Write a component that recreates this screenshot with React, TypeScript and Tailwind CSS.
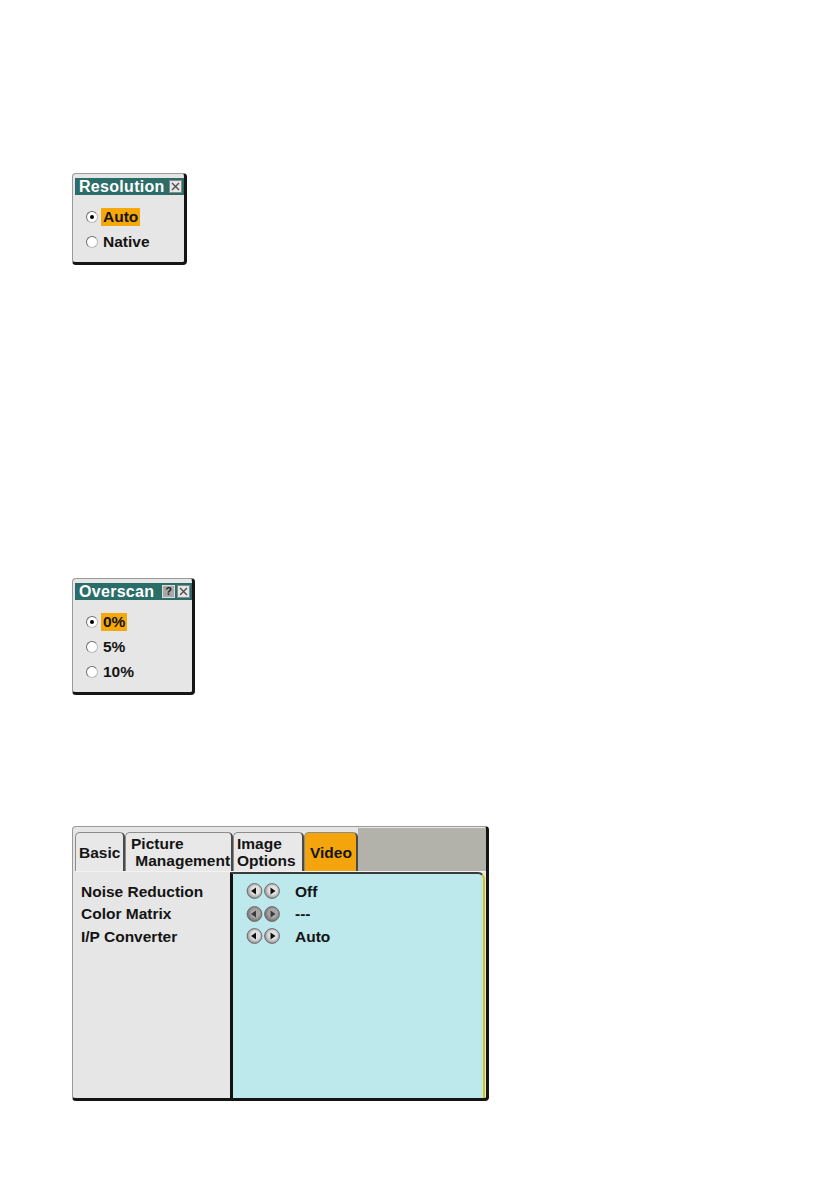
import { useId } from 'react';

// OSD-style projector menus: two small radio dialogs and the Video tab page.

const resolutionOptions = [
  { label: 'Auto', checked: true },
  { label: 'Native', checked: false },
];

const overscanOptions = [
  { label: '0%', checked: true },
  { label: '5%', checked: false },
  { label: '10%', checked: false },
];

const videoRows = [
  { label: 'Noise Reduction', value: 'Off', disabled: false },
  { label: 'Color Matrix', value: '---', disabled: true },
  { label: 'I/P Converter', value: 'Auto', disabled: false },
];

function CloseBox() {
  return (
    <svg width="13" height="13" viewBox="0 0 13 13" className="block">
      <rect x="0.5" y="0.5" width="12" height="12" fill="#e6e6e6" stroke="#8a8a8a" />
      <path d="M3 3 L10 10 M10 3 L3 10" stroke="#4a4a4a" strokeWidth="1.3" />
    </svg>
  );
}

function HelpBox() {
  return (
    <span className="flex h-[13px] w-[13px] items-center justify-center border border-[#dcdcdc] bg-[#a8a8a8] text-[11px] font-bold leading-none text-[#222]">
      ?
    </span>
  );
}

function Radio({ checked }: { checked: boolean }) {
  return (
    <span className="flex h-[12px] w-[12px] shrink-0 items-center justify-center rounded-full border border-[#6e6e6e] border-r-[#b8b8b8] border-b-[#b8b8b8] bg-white">
      {checked && <span className="h-[4px] w-[4px] rounded-full bg-black" />}
    </span>
  );
}

function Dialog({
  title,
  options,
  help,
  className,
}: {
  title: string;
  options: { label: string; checked: boolean }[];
  help?: boolean;
  className: string;
}) {
  return (
    <div
      className={`rounded-[4px] border-l border-t border-[#9a9a9a] border-r-[3px] border-b-[3px] border-r-[#161616] border-b-[#161616] bg-[#e6e6e6] pl-[2px] pt-[4px] pb-[8px] ${className}`}
    >
      <div className="flex h-[17px] items-center justify-between bg-[#2b6e69] pl-[4px] pr-[2px]">
        <span className="text-[16px] font-bold leading-none tracking-[0.3px] text-white">{title}</span>
        <div className="flex gap-[2px]">
          {help && <HelpBox />}
          <CloseBox />
        </div>
      </div>
      <ul className="pt-[9px] pl-[11px]">
        {options.map((o) => (
          <li key={o.label} className="flex h-[25px] items-center gap-[3px]">
            <Radio checked={o.checked} />
            <span
              className={`px-[2px] text-[15.5px] font-bold leading-[18px] text-[#141414] ${o.checked ? 'bg-[#f6a80a]' : ''}`}
            >
              {o.label}
            </span>
          </li>
        ))}
      </ul>
    </div>
  );
}

function ArrowPair({ disabled }: { disabled: boolean }) {
  const id = useId();
  const face = disabled ? '#a8a8a8' : '#e2e2e2';
  const rim = disabled ? '#666' : '#868686';
  const tri = disabled ? '#3a3a3a' : '#111';
  return (
    <svg width="35" height="16" viewBox="0 0 35 16" className="block shrink-0">
      <defs>
        <radialGradient id={id} cx="55%" cy="45%" r="60%">
          <stop offset="0" stopColor={face} />
          <stop offset="0.45" stopColor={face} />
          <stop offset="1" stopColor={rim} />
        </radialGradient>
      </defs>
      <circle cx="8.5" cy="8" r="7.4" fill={`url(#${id})`} stroke="#6c6c6c" strokeWidth="1" />
      <circle cx="26" cy="8" r="7.4" fill={`url(#${id})`} stroke="#6c6c6c" strokeWidth="1" />
      <path d="M5 8 L10 4.5 L10 11.5 Z" fill={tri} />
      <path d="M29.5 8 L24.5 4.5 L24.5 11.5 Z" fill={tri} />
    </svg>
  );
}

function Tab({
  lines,
  className,
  active,
}: {
  lines: string[];
  className: string;
  active?: boolean;
}) {
  return (
    <div
      className={`flex h-[39px] flex-col justify-center rounded-t-[5px] border-l border-t border-[#8c8c8c] border-r-2 border-r-[#4a4a4a] text-[15.5px] font-bold leading-[17px] text-[#141414] ${active ? 'bg-[#f5a50c] pl-[5px]' : 'bg-[#e8e8e8] pl-[3px]'} ${className}`}
    >
      {lines.map((l) => (
        <span key={l}>{l}</span>
      ))}
    </div>
  );
}

function VideoMenu() {
  return (
    <div className="mt-[131px] flex h-[275px] w-[417px] flex-col rounded-[4px] border-l border-t border-[#9a9a9a] border-r-[3px] border-b-[3px] border-r-[#141414] border-b-[#141414] bg-[#e6e6e6] pl-[2px] pt-[1px]">
      <div className="flex h-[43px] shrink-0">
        <div className="flex bg-[#e6e6e6] pt-[4px]">
          <Tab lines={['Basic']} className="w-[50px]" />
          <Tab lines={['Picture', ' Management']} className="w-[108px] whitespace-pre pl-[5px]" />
          <Tab lines={['Image', 'Options']} className="w-[71px]" />
          <Tab lines={['Video']} className="w-[54px]" active />
        </div>
        <div className="flex-1 bg-[#b2b2aa]" />
      </div>
      <div className="flex flex-1 border-t border-[#f2f2f2]">
        <ul className="w-[155px] shrink-0 pl-[6px] pt-[8px]">
          {videoRows.map((r) => (
            <li key={r.label} className="flex h-[22.5px] items-center text-[15.5px] font-bold text-[#141414]">
              {r.label}
            </li>
          ))}
        </ul>
        <div className="mr-[1px] flex-1 rounded-tr-[7px] border-l-[3px] border-t-2 border-r-2 border-l-[#111] border-t-[#3a3a3a] border-r-[#d2c21a] bg-[#bde8ec] pl-[13px] pt-[6px]">
          {videoRows.map((r) => (
            <div key={r.label} className="flex h-[22.5px] items-center gap-[14px]">
              <ArrowPair disabled={r.disabled} />
              <span className="text-[15.5px] font-bold text-[#141414]">{r.value}</span>
            </div>
          ))}
        </div>
      </div>
    </div>
  );
}

export default function App() {
  return (
    <div className="flex min-h-[1191px] w-[839px] flex-col items-start bg-white pl-[72px] pt-[173px] font-['Liberation_Sans',Arial,sans-serif]">
      <Dialog title="Resolution" options={resolutionOptions} className="w-[115px]" />
      <Dialog title="Overscan" options={overscanOptions} help className="mt-[313px] w-[123px]" />
      <VideoMenu />
    </div>
  );
}
